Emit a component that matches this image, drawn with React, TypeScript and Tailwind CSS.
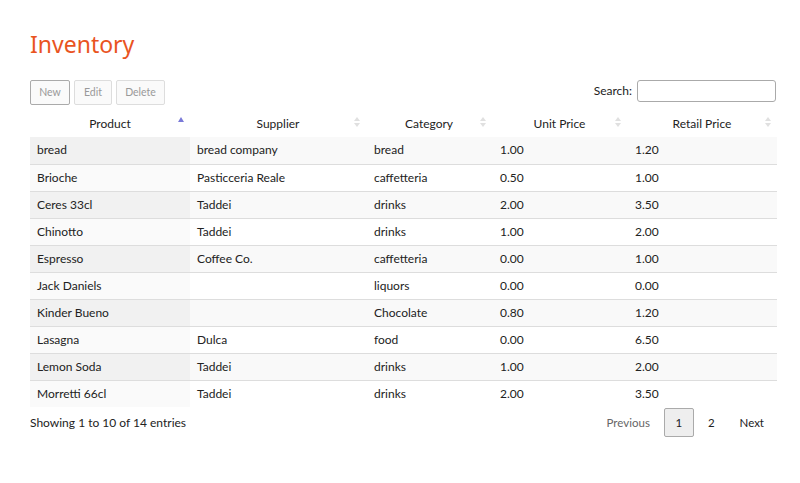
import React from "react";

type Row = {
  product: string;
  supplier: string;
  category: string;
  unit: string;
  retail: string;
};

const rows: Row[] = [
  { product: "bread", supplier: "bread company", category: "bread", unit: "1.00", retail: "1.20" },
  { product: "Brioche", supplier: "Pasticceria Reale", category: "caffetteria", unit: "0.50", retail: "1.00" },
  { product: "Ceres 33cl", supplier: "Taddei", category: "drinks", unit: "2.00", retail: "3.50" },
  { product: "Chinotto", supplier: "Taddei", category: "drinks", unit: "1.00", retail: "2.00" },
  { product: "Espresso", supplier: "Coffee Co.", category: "caffetteria", unit: "0.00", retail: "1.00" },
  { product: "Jack Daniels", supplier: "", category: "liquors", unit: "0.00", retail: "0.00" },
  { product: "Kinder Bueno", supplier: "", category: "Chocolate", unit: "0.80", retail: "1.20" },
  { product: "Lasagna", supplier: "Dulca", category: "food", unit: "0.00", retail: "6.50" },
  { product: "Lemon Soda", supplier: "Taddei", category: "drinks", unit: "1.00", retail: "2.00" },
  { product: "Morretti 66cl", supplier: "Taddei", category: "drinks", unit: "2.00", retail: "3.50" },
];

const SortAsc = () => (
  <svg width="8" height="10" viewBox="0 0 8 10">
    <path d="M4 1 L7 6 L1 6 Z" fill="#7a7ad8" />
  </svg>
);

const SortBoth = () => (
  <svg width="8" height="12" viewBox="0 0 8 12">
    <path d="M4 1 L7 5 L1 5 Z" fill="#e0e0e0" />
    <path d="M4 11 L7 7 L1 7 Z" fill="#e0e0e0" />
  </svg>
);

const Header = ({ label, width, sorted }: { label: string; width: string; sorted?: boolean }) => (
  <th className={`${width} relative h-[27px] p-0 text-center font-normal text-[#222]`}>
    {label}
    <span className="absolute right-[5px] top-[6px] flex">{sorted ? <SortAsc /> : <SortBoth />}</span>
  </th>
);

const App = () => {
  return (
    <div
      className="min-h-[483px] w-[800px] bg-white pl-[30px] pr-[24px] pt-[29px] text-[12px] text-[#222]"
      style={{ fontFamily: "Lato, 'Liberation Sans', sans-serif" }}
    >
      <h1
        className="mb-[21px] text-[23px] leading-[30px] text-[#e9541f]"
        style={{ fontFamily: "'Noto Sans', 'Open Sans', sans-serif" }}
      >
        Inventory
      </h1>

      <div className="flex items-start justify-between">
        <div className="flex gap-[4px]">
          <button className="h-[25px] w-[40px] rounded-[2px] border border-[#aaa] bg-[#fafafa] text-[10.5px] text-[#999]">
            New
          </button>
          <button className="h-[25px] w-[38px] rounded-[2px] border border-[#ddd] bg-[#fafafa] text-[10.5px] text-[#999]">
            Edit
          </button>
          <button className="h-[25px] w-[49px] rounded-[2px] border border-[#ddd] bg-[#fafafa] text-[10.5px] text-[#999]">
            Delete
          </button>
        </div>
        <div className="flex items-center gap-[5px] text-[12px]">
          <span>Search:</span>
          <input className="h-[22px] w-[139px] rounded-[3px] border border-[#aaa] bg-white outline-none" />
        </div>
      </div>

      <table className="mt-[5px] w-[747px] table-fixed border-collapse">
        <thead>
          <tr>
            <Header label="Product" width="w-[160px]" sorted />
            <Header label="Supplier" width="w-[176px]" />
            <Header label="Category" width="w-[126px]" />
            <Header label="Unit Price" width="w-[135px]" />
            <Header label="Retail Price" width="w-[150px]" />
          </tr>
        </thead>
        <tbody>
          {rows.map((r, i) => {
            const odd = i % 2 === 0;
            return (
              <tr
                key={r.product}
                className={`${odd ? "bg-[#f9f9f9]" : "bg-white"} ${i > 0 ? "border-t border-[#ddd]" : ""}`}
              >
                <td className={`h-[27px] px-[7px] ${odd ? "bg-[#f1f1f1]" : "bg-[#fafafa]"}`}>{r.product}</td>
                <td className="px-[7px]">{r.supplier}</td>
                <td className="px-[8px]">{r.category}</td>
                <td className="px-[8px]">{r.unit}</td>
                <td className="px-[8px]">{r.retail}</td>
              </tr>
            );
          })}
        </tbody>
      </table>

      <div className="mt-[1px] flex items-center justify-between">
        <div className="text-[12px]">Showing 1 to 10 of 14 entries</div>
        <div className="flex items-center text-[11.5px]">
          <span className="px-[14px] text-[#666]">Previous</span>
          <span className="flex h-[29px] w-[30px] items-center justify-center rounded-[2px] border border-[#aaa] bg-[#eee]">
            1
          </span>
          <span className="px-[14px]">2</span>
          <span className="pl-[11px] pr-[12px]">Next</span>
        </div>
      </div>
    </div>
  );
};

export default App;
